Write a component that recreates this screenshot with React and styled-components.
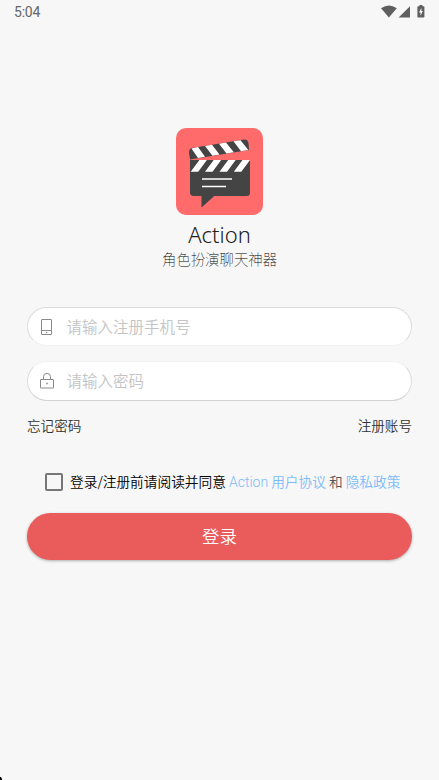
import React, { useState } from 'react'
import styled, { createGlobalStyle, css } from 'styled-components'

const App = () => {
  const [phone, setPhone] = useState('')
  const [password, setPassword] = useState('')
  const [agreed, setAgreed] = useState(false)

  return (
    <Screen>
      <GlobalStyle />
      <StatusBar>
        <Clock>5:04</Clock>
        <StatusIcons />
      </StatusBar>

      <Brand>
        <Logo />
        <AppName>Action</AppName>
        <Slogan>角色扮演聊天神器</Slogan>
      </Brand>

      <Form onSubmit={e => e.preventDefault()}>
        <Field>
          <PhoneIcon />
          <Input
            placeholder="请输入注册手机号"
            value={phone}
            onChange={e => setPhone(e.target.value)}
          />
        </Field>
        <Field lined>
          <LockIcon />
          <Input
            type="password"
            placeholder="请输入密码"
            value={password}
            onChange={e => setPassword(e.target.value)}
          />
        </Field>

        <Links>
          <span>忘记密码</span>
          <span>注册账号</span>
        </Links>

        <Agreement>
          <Checkbox type="checkbox" checked={agreed} onChange={() => setAgreed(!agreed)} />
          <Consent>登录/注册前请阅读并同意</Consent>
          <Policy><Latin>Action</Latin> 用户协议</Policy>
          <And>和</And>
          <Policy>隐私政策</Policy>
        </Agreement>

        <Submit type="submit">登录</Submit>
      </Form>

      <Corner />
    </Screen>
  )
}

export default App

const StatusIcons = () => (
  <svg width="46" height="14" viewBox="0 0 46 14" fill="#5f5f5f">
    <path d="M0 3.2Q8 -2.4 15.8 3.2L7.9 12.4Z" />
    <path d="M29 1.2V12.500H17.600Z" />
    <path d="M37.200 1.200h1.200V0h3v1.200h1.200q.8 0 .8.8v9.700q0 .8-.8.8H37.200q-.8 0-.8-.8V2q0-.8.8-.8Z" />
    <path d="M40.400 2.800 38 7.400h1.500v3.300l2.400-4.700h-1.500Z" fill="#f7f7f7" />
  </svg>
)

const Logo = () => (
  <svg width="87" height="87" viewBox="0 0 87 87">
    <rect width="87" height="87" rx="10" fill="#ff6b6b" />
    <path d="M14 32H74V64.500Q74 68 70.500 68H38.300L25.500 79.500V68H18Q14 68 14 64.500Z" fill="#444" />
    <path
      d="M23.400 32H30.900L22.200 43.700H14.700ZM37.700 32H45.200L36.500 43.700H29ZM52.200 32H59.700L51 43.700H43.500ZM66.500 32H74L65.300 43.700H57.800Z"
      fill="#fff"
    />
    <path d="M13 24.500Q13 20.500 16 20L68 11.600Q72 11.500 72.500 15L73 22L14 31.500Z" fill="#444" />
    <path
      d="M15.500 20.500L22 19.100L29 28.800L22 30.100ZM29 17.900L36 16.800L43.500 26.600L36.500 27.700ZM43 15.700L50 14.500L57.800 24.300L50.500 25.500ZM57.500 13.300L64.500 12.200L72.300 22L65 23.200Z"
      fill="#fff"
    />
    <path d="M26 51H56M26 58.500H50" stroke="#fff" strokeWidth="1.300" />
  </svg>
)

const PhoneIcon = () => (
  <Glyph width="14" height="18" viewBox="0 0 14 18">
    <rect x="1.500" y="1.500" width="10" height="15" rx=".3" />
    <path d="M1.500 12.500H11.500" />
    <path d="M5.700 14.500H7.300" strokeWidth="1.200" />
  </Glyph>
)

const LockIcon = () => (
  <Glyph width="14" height="18" viewBox="0 0 14 18">
    <rect x=".5" y="7.500" width="13" height="8.500" rx=".3" />
    <path d="M3.500 7.500V4.800a3.500 3.500 0 0 1 7 0V7.500" />
    <path d="M6.200 11.500H7.800" strokeWidth="1.600" />
  </Glyph>
)

const GlobalStyle = createGlobalStyle`
  * {
    box-sizing: border-box;
  }

  body {
    margin: 0;
    background: #f7f7f7;
    font-family: Roboto, 'Noto Sans CJK SC', sans-serif;
  }
`

const Screen = styled.main`
  position: relative;
  display: flex;
  flex-direction: column;
  height: 780px;
  overflow: hidden;
  background: #f7f7f7;
`

const StatusBar = styled.header`
  display: flex;
  align-items: center;
  justify-content: space-between;
  height: 24px;
  padding: 0 12px 0 14px;
`

const Clock = styled.span`
  font-size: 14px;
  line-height: 24px;
  letter-spacing: -0.2px;
  color: #666;
`

const Brand = styled.section`
  display: flex;
  flex-direction: column;
  align-items: center;
  height: 283px;
  padding-top: 104px;
`

const AppName = styled.h1`
  margin: 5px 0 0;
  font: 300 22px/28px 'Noto Sans', 'Open Sans', sans-serif;
  color: #222;
`

const Slogan = styled.p`
  margin: 1px 0 0;
  font: 100 14.4px/20px 'Noto Sans CJK SC', sans-serif;
  color: #000;
`

const Form = styled.form`
  display: flex;
  flex-direction: column;
  padding: 0 27px;
`

const Field = styled.label`
  display: flex;
  align-items: center;
  height: 39px;
  margin-bottom: 15px;
  padding-left: 12px;
  border: 1px solid #dcdcdc;
  border-bottom-color: #f2f2f2;
  border-radius: 20px;
  background: #fff;

  ${p => p.lined && css`
    height: 40px;
    margin-bottom: 0;
    border-top-color: #f2f2f2;
    border-bottom-color: #d2d2d2;
  `}
`

const Glyph = styled.svg`
  flex: none;
  fill: none;
  stroke: #8a8a8a;
`

const Input = styled.input`
  flex: 1;
  min-width: 0;
  margin-left: 12.5px;
  padding: 0 0 2px;
  border: 0;
  outline: 0;
  background: none;
  font: 350 15.5px/24px 'Noto Sans CJK SC', sans-serif;
  color: #333;

  &::placeholder {
    color: #c4c4c4;
  }
`

const Links = styled.nav`
  display: flex;
  justify-content: space-between;
  margin-top: 14px;
  font: 350 13.6px/20px 'Noto Sans CJK SC', sans-serif;
  color: #333;
`

const Agreement = styled.div`
  display: flex;
  align-items: center;
  height: 20px;
  margin: 37px 0 0 18px;
  font: 350 13.7px/20px 'Noto Sans CJK SC', sans-serif;
  white-space: nowrap;
`

const Checkbox = styled.input`
  appearance: none;
  width: 18px;
  height: 18px;
  margin: 0 7px 0 0;
  border: 2px solid #777;
  border-radius: 2px;

  &:checked {
    background: #ea5c5c;
  }
`

const Consent = styled.span`
  margin-top: -2px;
  color: #000;
`

const Policy = styled.a`
  margin: -2px 0 0 3px;
  color: #7dbcf8;
`

const Latin = styled.span`
  font-family: Roboto, sans-serif;
  font-size: 14px;
  font-weight: 350;
  line-height: 1;
`

const And = styled.span`
  margin: -2px 0 0 3px;
  color: #555;
`

const Submit = styled.button`
  height: 47px;
  margin-top: 21px;
  padding: 0 0 2px;
  border: 0;
  border-radius: 24px;
  background: #ea5c5c;
  box-shadow: 0 1px 3px rgba(0, 0, 0, 0.3);
  font: 350 17.4px/45px 'Noto Sans CJK SC', sans-serif;
  color: #fff;
`

// sliver of the rounded display edge
const Corner = styled.i`
  position: absolute;
  bottom: 0;
  left: 0;
  width: 2px;
  height: 3px;
  background: #000;
  clip-path: polygon(0 0, 50% 0, 100% 70%, 100% 100%, 0 100%);
`
